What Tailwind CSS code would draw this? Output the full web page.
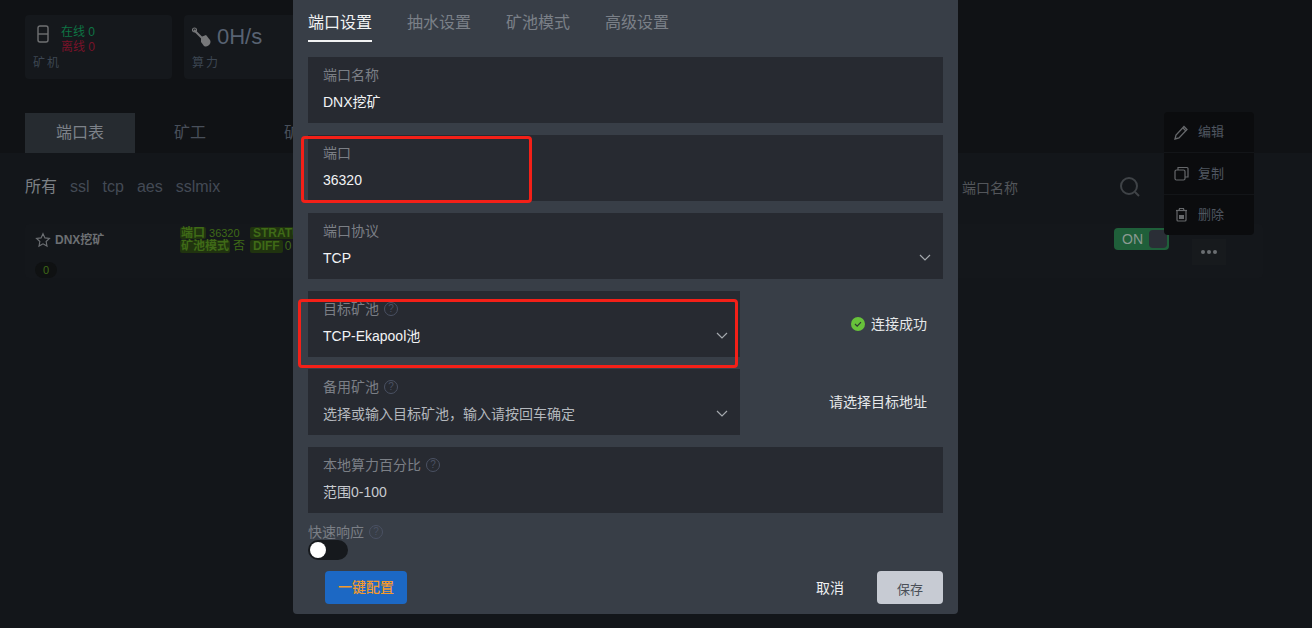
<!DOCTYPE html>
<html lang="zh-CN">
<head>
    <meta charset="UTF-8">
    <title>端口设置</title>
    <script src="https://cdn.jsdelivr.net/npm/@tailwindcss/browser@4"></script>
</head>
<body class="bg-[#101215] font-['Liberation_Sans','Noto_Sans_CJK_SC',sans-serif]">
    <div class="relative w-[1312px] h-[628px] overflow-hidden">

        <!-- page behind the dialog -->
        <div class="flex flex-col h-full">
            <div class="flex gap-3 pl-[25px] pt-[15px]">
                <div class="w-[147px] h-[64px] bg-[#15181c] rounded-sm pl-2 pt-[10px]">
                    <div class="flex">
                        <svg class="ml-[3px] w-[14px] h-[18px]" viewBox="0 0 14 18" fill="none" stroke="#6f7072" stroke-width="1.4"><rect x="2" y="1" width="10" height="16" rx="2"/><path d="M2 9h10"/></svg>
                        <div class="ml-[11px] text-xs leading-[15px]">
                            <div class="text-[#0e7444]">在线 0</div>
                            <div class="text-[#7a1229]">离线 0</div>
                        </div>
                    </div>
                    <div class="mt-0 text-xs tracking-[2px] text-[#3c4652]">矿机</div>
                </div>
                <div class="w-[147px] h-[64px] bg-[#15181c] rounded-sm pl-2 pt-[8px]">
                    <div class="flex items-center h-[27px]">
                        <svg class="w-[19px] h-[20px]" viewBox="0 0 19 20"><path d="M2 3l9 9" stroke="#77787a" stroke-width="2" fill="none"/><circle cx="2.5" cy="3" r="2" fill="none" stroke="#77787a" stroke-width="1.2"/><path d="M9 10l5-2 4 5a4.500 4.500 0 0 1-6 6l-3-4z" fill="#77787a"/></svg>
                        <span class="ml-[6px] text-[22px] text-[#586272]">0H/s</span>
                    </div>
                    <div class="mt-[5px] text-xs tracking-[2px] text-[#3c4652]">算力</div>
                </div>
            </div>

            <div class="flex mt-[34px] pl-[25px] h-[40px] text-base leading-[40px] text-center text-[#484f5a]">
                <div class="w-[110px] bg-[#262b30] text-[#7d8289]">端口表</div>
                <div class="w-[110px]">矿工</div>
                <div class="w-[110px]">矿池</div>
            </div>

            <div class="flex-1 bg-[#13161a] pl-[25px] pr-[49px]">
                <div class="flex items-center h-[68px] text-base text-[#434a55]">
                    <span class="text-[#7c8186]">所有</span>
                    <span class="ml-[13px]">ssl</span>
                    <span class="ml-[13px]">tcp</span>
                    <span class="ml-[13px]">aes</span>
                    <span class="ml-[13px]">sslmix</span>
                    <div class="ml-auto mr-[122px] w-[179px] flex items-center justify-between text-sm text-[#53565b]">
                        <span class="pt-px">端口名称</span>
                        <svg class="w-[22px] h-[22px]" viewBox="0 0 22 22" fill="none" stroke="#3f4347" stroke-width="2"><circle cx="10" cy="10" r="8"/><path d="M16 16l4 4"/></svg>
                    </div>
                </div>
                <div class="mt-[3px] flex h-[54px] bg-[#14171b] rounded-sm pl-[10px]">
                    <div class="w-[145px] pt-[7px]">
                        <div class="flex items-center h-[18px]">
                            <svg class="w-[16px] h-[16px]" viewBox="0 0 24 24" fill="none" stroke="#6c6f73" stroke-width="1.700"><path d="M12 2.500l2.900 6.300 6.800.8-5 4.700 1.300 6.800-6-3.400-6 3.400 1.300-6.800-5-4.700 6.800-.8z"/></svg>
                            <span class="ml-[4px] text-xs font-bold text-[#6c6f73]">DNX挖矿</span>
                        </div>
                        <div class="mt-[13px] w-[22px] h-[16px] rounded-full bg-[#0f1112] text-[11px] leading-[16px] text-center text-[#3f6a17]">0</div>
                    </div>
                    <div class="pt-[3px] flex flex-col gap-px text-xs text-[#3f6a17] whitespace-nowrap">
                        <div class="flex items-center h-[12px] leading-[12px]">
                            <span class="bg-[#20330f] h-[12px] px-[1px] rounded-[2px] font-bold">端口</span>
                            <span class="ml-[3px] w-[38px] text-[11px]">36320</span>
                            <span class="ml-[3px] bg-[#20330f] h-[12px] px-[3px] rounded-[2px] font-bold">STRATUM</span>
                        </div>
                        <div class="flex items-center h-[13px] leading-[13px]">
                            <span class="bg-[#20330f] h-[13px] px-[1px] rounded-[2px] font-bold">矿池模式</span>
                            <span class="ml-[3px] w-[17px]">否</span>
                            <span class="bg-[#20330f] h-[13px] px-[3px] rounded-[2px] font-bold">DIFF</span>
                            <span class="ml-[2px]">0</span>
                        </div>
                    </div>
                    <div class="ml-auto flex items-start">
                        <div class="mt-[4px] w-[55px] h-[22px] rounded-sm bg-[#1f5f3a] flex items-center justify-between pl-2 pr-[2px]">
                            <span class="text-sm text-[#8b9a92]">ON</span>
                            <span class="w-[18px] h-[18px] rounded-sm bg-[#2a2e36]"></span>
                        </div>
                        <div class="ml-[23px] mr-[37px] mt-[15px] w-[34px] h-[26px] bg-[#171a1d] flex items-center justify-center gap-[2px]">
                            <span class="w-[4px] h-[4px] rounded-full bg-[#6b6e72]"></span>
                            <span class="w-[4px] h-[4px] rounded-full bg-[#6b6e72]"></span>
                            <span class="w-[4px] h-[4px] rounded-full bg-[#6b6e72]"></span>
                        </div>
                    </div>
                </div>
            </div>
        </div>

        <!-- row menu -->
        <div class="absolute left-[1164px] top-[112px] w-[90px] h-[123px] bg-[#0b0c0e] rounded-sm text-[13px] text-[#4f5660] flex flex-col divide-y divide-[#131518]">
            <div class="flex-1 flex items-center pl-[10px] gap-[9px]">
                <svg class="w-[15px] h-[15px]" viewBox="0 0 15 15" fill="none" stroke="#66686b" stroke-width="1.300"><path d="M1 14l1-4 8-8.500 3 3L5 13z"/><path d="M9 3l3 3"/></svg>
                <span>编辑</span>
            </div>
            <div class="flex-1 flex items-center pl-[10px] gap-[9px]">
                <svg class="w-[15px] h-[15px]" viewBox="0 0 15 15" fill="none" stroke="#66686b" stroke-width="1.200"><rect x="1" y="4" width="10" height="10" rx="1.500"/><path d="M4 4V1.500h9a1 1 0 0 1 1 1V11h-3"/></svg>
                <span>复制</span>
            </div>
            <div class="flex-1 flex items-center pl-[10px] gap-[9px]">
                <svg class="w-[15px] h-[15px]" viewBox="0 0 15 15" fill="none" stroke="#66686b" stroke-width="1.200"><path d="M2 3.500h11"/><path d="M5 3.500l.5-2h4l.5 2"/><path d="M3 3.500v9.500a1 1 0 0 0 1 1h7a1 1 0 0 0 1-1V3.500"/><rect x="5" y="8" width="5" height="4" fill="#66686b" stroke="none"/></svg>
                <span>删除</span>
            </div>
        </div>

        <!-- dialog -->
        <div class="absolute left-[293px] top-0 w-[665px] h-[614px] bg-[#383e47] rounded-b-sm px-[15px]">
            <div class="flex gap-[35px] h-[42px] text-base text-[#7b8088]">
                <div class="h-[42px] leading-[45px] text-[#f2f3f4] border-b-2 border-[#f2f3f4]">端口设置</div>
                <div class="leading-[45px]">抽水设置</div>
                <div class="leading-[45px]">矿池模式</div>
                <div class="leading-[45px]">高级设置</div>
            </div>

            <div class="mt-[15px] flex flex-col gap-3 text-sm">
                <div class="h-[66px] bg-[#272a31] px-[15px] pt-[9px]">
                    <div class="h-[18px] leading-[18px] text-[#7b7f86]">端口名称</div>
                    <div class="mt-[8px] h-[20px] leading-[20px] text-[#f2f3f5]">DNX挖矿</div>
                </div>
                <div class="h-[66px] bg-[#272a31] px-[15px] pt-[9px]">
                    <div class="h-[18px] leading-[18px] text-[#7b7f86]">端口</div>
                    <div class="mt-[8px] h-[20px] leading-[20px] text-[#f2f3f5]">36320</div>
                </div>
                <div class="relative h-[66px] bg-[#272a31] px-[15px] pt-[9px]">
                    <div class="h-[18px] leading-[18px] text-[#7b7f86]">端口协议</div>
                    <div class="mt-[8px] h-[20px] leading-[20px] text-[#f2f3f5]">TCP</div>
                    <svg class="absolute right-[12px] top-[41px] w-[12px] h-[8px]" viewBox="0 0 12 8" fill="none" stroke="#a5a9ae" stroke-width="1.200"><path d="M1 1l5 5 5-5"/></svg>
                </div>
                <div class="flex h-[66px]">
                    <div class="relative w-[432px] bg-[#272a31] px-[15px] pt-[9px]">
                        <div class="flex items-center h-[18px] text-[#7b7f86]">目标矿池
                            <span class="ml-[5px] w-[14px] h-[14px] rounded-full border border-[#4a5163] text-[10px] leading-[12px] text-center text-[#4a5163]">?</span>
                        </div>
                        <div class="mt-[8px] h-[20px] leading-[20px] text-[#f2f3f5]">TCP-Ekapool池</div>
                        <svg class="absolute right-[12px] top-[41px] w-[12px] h-[8px]" viewBox="0 0 12 8" fill="none" stroke="#a5a9ae" stroke-width="1.200"><path d="M1 1l5 5 5-5"/></svg>
                    </div>
                    <div class="flex-1 flex items-center justify-end pr-[16px] text-sm text-[#e6e8ea]">
                        <svg class="mr-[6px] w-[14px] h-[14px]" viewBox="0 0 14 14"><circle cx="7" cy="7" r="7" fill="#67c23a"/><path d="M4 7l2.200 2.200L10 5.200" fill="none" stroke="#2f3a33" stroke-width="1.200"/></svg>
                        连接成功
                    </div>
                </div>
                <div class="flex h-[66px]">
                    <div class="relative w-[432px] bg-[#272a31] px-[15px] pt-[9px]">
                        <div class="flex items-center h-[18px] text-[#7b7f86]">备用矿池
                            <span class="ml-[5px] w-[14px] h-[14px] rounded-full border border-[#4a5163] text-[10px] leading-[12px] text-center text-[#4a5163]">?</span>
                        </div>
                        <div class="mt-[8px] h-[20px] leading-[20px] text-[#b4b8bd]">选择或输入目标矿池，输入请按回车确定</div>
                        <svg class="absolute right-[12px] top-[41px] w-[12px] h-[8px]" viewBox="0 0 12 8" fill="none" stroke="#a5a9ae" stroke-width="1.200"><path d="M1 1l5 5 5-5"/></svg>
                    </div>
                    <div class="flex-1 flex items-center justify-end pr-[16px] text-sm text-[#e6e8ea]">请选择目标地址</div>
                </div>
                <div class="h-[66px] bg-[#272a31] px-[15px] pt-[9px]">
                    <div class="flex items-center h-[18px] text-[#7b7f86]">本地算力百分比
                        <span class="ml-[5px] w-[14px] h-[14px] rounded-full border border-[#4a5163] text-[10px] leading-[12px] text-center text-[#4a5163]">?</span>
                    </div>
                    <div class="mt-[8px] h-[20px] leading-[20px] text-[#c8cbd0]">范围0-100</div>
                </div>
            </div>

            <div class="mt-[10px] flex items-center h-[18px] text-sm text-[#7b7f86]">快速响应
                <span class="ml-[5px] w-[14px] h-[14px] rounded-full border border-[#4a5163] text-[10px] leading-[12px] text-center text-[#4a5163]">?</span>
            </div>
            <div class="-mt-[1px] w-[40px] h-[20px] rounded-full bg-[#16191d] pl-[2px] flex items-center">
                <span class="w-[16px] h-[16px] rounded-full bg-white"></span>
            </div>

            <div class="mt-[11px] flex items-center h-[33px] text-[13px]">
                <div class="ml-[17px] w-[82px] h-[33px] leading-[33px] text-center rounded-sm bg-[#1c68c4] text-sm font-medium text-[#f39a2c]">一键配置</div>
                <div class="ml-auto text-sm text-[#eef0f2]">取消</div>
                <div class="ml-[33px] w-[66px] h-[33px] leading-[37px] text-center rounded-sm bg-[#c7cbd3] text-[#4a4f57]">保存</div>
            </div>
        </div>

        <!-- annotation boxes drawn over the screenshot -->
        <div class="absolute left-[301px] top-[136px] w-[231px] h-[67px] border-[3px] border-[#f42018] rounded-sm"></div>
        <div class="absolute left-[298px] top-[299px] w-[440px] h-[69px] border-[3px] border-[#f42018] rounded-sm"></div>
    </div>
</body>
</html>
